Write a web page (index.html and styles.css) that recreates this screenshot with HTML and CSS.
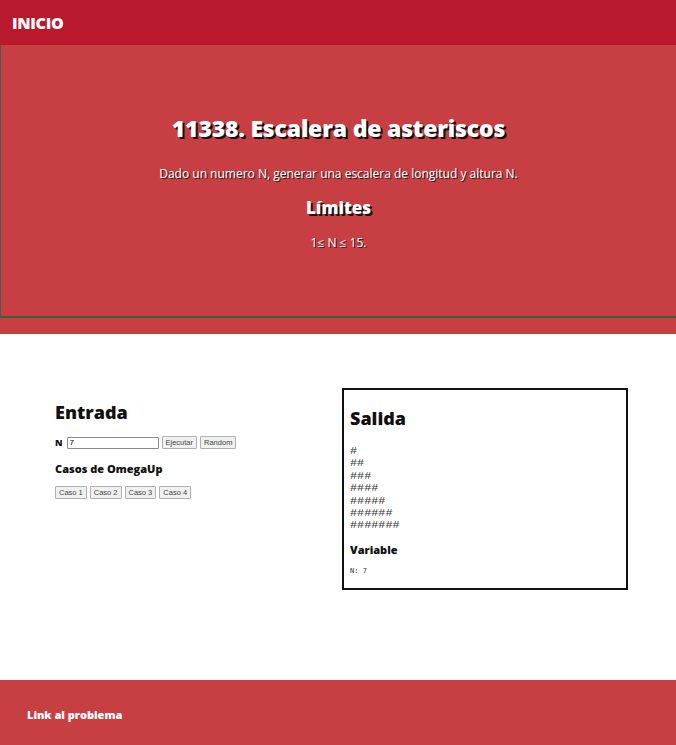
FILE: index.html
```html
<!DOCTYPE html>
<html lang="es">
<head>
<meta charset="utf-8">
<title>Escalera de asteriscos</title>
<link rel="stylesheet" href="styles.css">
</head>
<body>
<header class="topbar">
  <a class="brand" href="#">INICIO</a>
</header>
<section class="hero">
  <div class="hero-inner">
    <h1 class="hero-title">11338. Escalera de asteriscos</h1>
    <p class="hero-text">Dado un numero N, generar una escalera de longitud y altura N.</p>
    <h2 class="hero-sub">Límites</h2>
    <p class="hero-limits">1≤ N ≤ 15.</p>
  </div>
</section>
<main class="main">
  <div class="col-in">
    <h2 class="sec-title">Entrada</h2>
    <div class="row">
      <label class="lbl" for="n">N</label>
      <input class="inp" id="n" type="text" value="7">
      <button class="btn">Ejecutar</button>
      <button class="btn">Random</button>
    </div>
    <h3 class="small-title">Casos de OmegaUp</h3>
    <div class="row cases">
      <button class="btn">Caso 1</button>
      <button class="btn">Caso 2</button>
      <button class="btn">Caso 3</button>
      <button class="btn">Caso 4</button>
    </div>
  </div>
  <div class="col-out">
    <h2 class="sec-title">Salida</h2>
    <pre class="output">#
##
###
####
#####
######
#######</pre>
    <h3 class="small-title">Variable</h3>
    <pre class="vars">N: 7</pre>
  </div>
</main>
<footer class="footer">
  <a class="foot-link" href="#">Link al problema</a>
</footer>
</body>
</html>
```
FILE: styles.css
```css
* { box-sizing: border-box; }
html, body { margin: 0; padding: 0; }
body {
  font-family: "Open Sans", "DejaVu Sans", sans-serif;
  color: #111;
  background: #fff;
  width: 676px;
}
.topbar {
  height: 45px;
  background: #b8192d;
  display: flex;
  align-items: center;
  padding-left: 12px;
}
.brand {
  color: #fff;
  text-decoration: none;
  font-weight: 800;
  font-size: 16px;
  letter-spacing: -0.3px;
}
.hero {
  background: #c83f43;
  padding-bottom: 16px;
}
.hero-inner {
  height: 273px;
  border-left: 1px solid #555;
  border-bottom: 2px solid #3b5e35;
  display: flex;
  flex-direction: column;
  align-items: center;
  justify-content: center;
  color: #fff;
  padding-top: 2px;
}
.hero-title {
  margin: 0;
  font-size: 23px;
  font-weight: 800;
  text-shadow: 2px 2px 0 #111;
  letter-spacing: -0.2px;
}
.hero-text {
  margin: 21px 0 0;
  font-size: 12px;
  text-shadow: 1px 1px 0 #222;
}
.hero-sub {
  margin: 14px 0 0;
  font-size: 17px;
  font-weight: 800;
  text-shadow: 2px 2px 0 #111;
}
.hero-limits {
  margin: 15px 0 0;
  font-size: 12px;
  text-shadow: 1px 1px 0 #222;
}
.main {
  height: 346px;
  display: grid;
  grid-template-columns: 275px 286px;
  column-gap: 12px;
  padding: 54px 0 0 55px;
  align-items: start;
}
.col-in { padding-top: 12px; }
.sec-title {
  margin: 0;
  font-size: 18px;
  font-weight: 800;
  line-height: 24px;
}
.row {
  display: flex;
  align-items: center;
  gap: 3px;
  margin-top: 12px;
}
.lbl {
  font-size: 9px;
  font-weight: 800;
  margin-right: 1px;
}
.inp {
  width: 92px;
  height: 12px;
  font: 8px "Liberation Sans", Arial, sans-serif;
  padding: 0 2px;
  border: 1px solid #8a8a8a;
  border-radius: 1px;
  margin-right: 0;
}
.btn {
  height: 13px;
  font: 7.5px "Liberation Sans", Arial, sans-serif;
  color: #444;
  background: #f0f0f0;
  border: 1px solid #b0b0b0;
  border-radius: 1px;
  padding: 0 3px;
  line-height: 11px;
}
.small-title {
  margin: 12px 0 0;
  font-size: 11px;
  font-weight: 800;
}
.cases { margin-top: 10px; }
.col-out {
  border: 2px solid #111;
  height: 202px;
  padding: 16px 6px 0;
}
.output {
  margin: 15px 0 0;
  font: 11.8px/12.4px "Liberation Mono", monospace;
  color: #333;
}
.col-out .small-title { margin-top: 10px; }
.vars {
  margin: 10px 0 0;
  font: 7px "DejaVu Sans Mono", monospace;
  color: #333;
}
.footer {
  height: 65px;
  background: #c83f43;
  display: flex;
  align-items: center;
  padding-left: 27px;
  padding-top: 4px;
}
.foot-link {
  color: #fff;
  text-decoration: none;
  font-size: 11px;
  font-weight: 800;
}
```
